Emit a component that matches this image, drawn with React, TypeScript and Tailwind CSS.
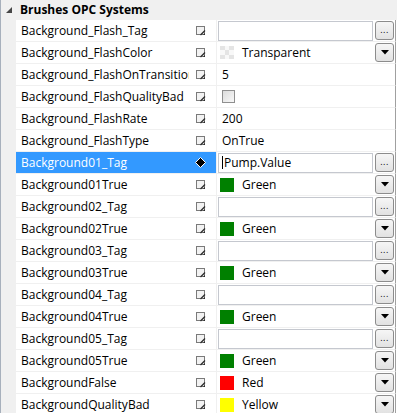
import React from "react";

type Kind = "tag" | "color" | "text" | "check";

interface Row {
  name: string;
  kind: Kind;
  value?: string;
  swatch?: string;
  selected?: boolean;
}

const rows: Row[] = [
  { name: "Background_Flash_Tag", kind: "tag", value: "" },
  { name: "Background_FlashColor", kind: "color", value: "Transparent", swatch: "checker" },
  { name: "Background_FlashOnTransition", kind: "text", value: "5" },
  { name: "Background_FlashQualityBad", kind: "check" },
  { name: "Background_FlashRate", kind: "text", value: "200" },
  { name: "Background_FlashType", kind: "text", value: "OnTrue" },
  { name: "Background01_Tag", kind: "tag", value: "Pump.Value", selected: true },
  { name: "Background01True", kind: "color", value: "Green", swatch: "#008000" },
  { name: "Background02_Tag", kind: "tag", value: "" },
  { name: "Background02True", kind: "color", value: "Green", swatch: "#008000" },
  { name: "Background03_Tag", kind: "tag", value: "" },
  { name: "Background03True", kind: "color", value: "Green", swatch: "#008000" },
  { name: "Background04_Tag", kind: "tag", value: "" },
  { name: "Background04True", kind: "color", value: "Green", swatch: "#008000" },
  { name: "Background05_Tag", kind: "tag", value: "" },
  { name: "Background05True", kind: "color", value: "Green", swatch: "#008000" },
  { name: "BackgroundFalse", kind: "color", value: "Red", swatch: "#ff0000" },
  { name: "BackgroundQualityBad", kind: "color", value: "Yellow", swatch: "#ffff00" },
];

// little "edit" square with the pencil nib in its corner
const EditIcon = () => (
  <svg width="10" height="10" viewBox="0 0 10 10" className="shrink-0">
    <rect x="0.5" y="0.5" width="8" height="8" fill="#f2f2f2" stroke="#7a7a7a" />
    <path d="M4.5 9 L9 4.5" stroke="#2a2a2a" strokeWidth="1.2" />
    <path d="M7 9 L9 7 L9 9 Z" fill="#2a2a2a" />
  </svg>
);

const DiamondIcon = () => (
  <svg width="11" height="11" viewBox="0 0 11 11" className="shrink-0">
    <path d="M5.5 0.5 L10.5 5.5 L5.5 10.5 L0.5 5.5 Z" fill="#000" stroke="#fff" strokeWidth="1" />
  </svg>
);

const SmallButton = ({ children }: { children: React.ReactNode }) => (
  <div className="w-[19px] h-[19px] shrink-0 rounded-[3px] border border-[#8c8c8c] bg-gradient-to-b from-[#f6f6f6] to-[#e2e2e2] flex items-center justify-center">
    {children}
  </div>
);

const Swatch = ({ color }: { color: string }) => {
  if (color === "checker") {
    return (
      <div className="w-[14px] h-[14px] shrink-0 grid grid-cols-3 grid-rows-3">
        {[0, 1, 2, 3, 4, 5, 6, 7, 8].map((i) => (
          <div key={i} className={i % 2 === 0 ? "bg-[#e4e4e4]" : "bg-[#f8f8f8]"} />
        ))}
      </div>
    );
  }
  return <div className="w-[14px] h-[14px] shrink-0" style={{ backgroundColor: color }} />;
};

const ValueCell = ({ row }: { row: Row }) => {
  if (row.kind === "tag") {
    return (
      <div className="flex items-center h-full gap-[2px]">
        <div className="flex-1 h-[20px] border border-[#c5c8cf] flex items-center pl-[3px]">
          {row.selected && <span className="w-px h-[13px] bg-black" />}
          <span className="pl-px">{row.value}</span>
        </div>
        <SmallButton>
          <span className="text-[9px] leading-none -mt-[3px] tracking-[0.5px]">...</span>
        </SmallButton>
      </div>
    );
  }
  if (row.kind === "color") {
    return (
      <div className="flex items-center h-full">
        <div className="flex-1 flex items-center pl-[2px] gap-[8px]">
          <Swatch color={row.swatch || ""} />
          <span>{row.value}</span>
        </div>
        <SmallButton>
          <svg width="8" height="5" viewBox="0 0 8 5">
            <path d="M0 0 L8 0 L4 4.5 Z" fill="#000" />
          </svg>
        </SmallButton>
      </div>
    );
  }
  if (row.kind === "check") {
    return (
      <div className="flex items-center h-full pl-[4px]">
        <div className="w-[13px] h-[13px] border border-[#8f8f8f] bg-gradient-to-br from-[#dcdcdc] to-[#f8f8f8]" />
      </div>
    );
  }
  return <div className="flex items-center h-full pl-[4px]">{row.value}</div>;
};

const PropertyGrid: React.FC = () => {
  return (
    <div className="w-[397px] h-[413px] overflow-hidden bg-white flex text-[12px] text-black font-['Segoe_UI','Open_Sans',sans-serif]">
      <div className="w-px bg-[#a7b0bc] shrink-0" />
      <div className="flex-1 flex flex-col min-w-0">
        <div className="h-[20px] shrink-0 flex items-center bg-[#f0f0f0]">
          <div className="w-[15px] flex justify-center">
            <svg width="6" height="6" viewBox="0 0 6 6">
              <path d="M6 0 L6 6 L0 6 Z" fill="#464646" />
            </svg>
          </div>
          <span className="font-bold pl-[4px]">Brushes OPC Systems</span>
        </div>
        {rows.map((row) => (
          <div key={row.name} className="h-[22px] shrink-0 flex">
            <div className="w-[15px] shrink-0 bg-[#f0f0f0]" />
            <div className="flex-1 flex border-b border-[#f0f0f0] border-r border-r-[#a0a0a0] mr-px">
              <div
                className={
                  "w-[200px] shrink-0 flex items-center pl-[5px] pr-[10px] " +
                  (row.selected ? "bg-[#3399ff] text-white" : "")
                }
              >
                <span className="flex-1 min-w-0 overflow-hidden whitespace-nowrap mr-[7px]">{row.name}</span>
                {row.selected ? <DiamondIcon /> : <EditIcon />}
              </div>
              <div className="flex-1 border-l border-[#f0f0f0] pl-px pr-[1px] min-w-0">
                <ValueCell row={row} />
              </div>
            </div>
          </div>
        ))}
      </div>
    </div>
  );
};

export default function App() {
  return <PropertyGrid />;
}
